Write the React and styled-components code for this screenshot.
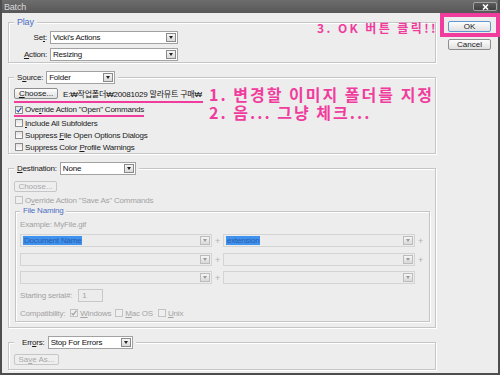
import React from "react";
import styled, { createGlobalStyle } from "styled-components";

const GlobalStyle = createGlobalStyle`
  html, body {
    margin: 0;
    padding: 0;
    background: #ededed;
  }
  body {
    font-family: "Liberation Sans", "Noto Sans CJK KR", sans-serif;
    font-size: 8px;
    letter-spacing: -0.2px;
    color: #1a1a1a;
  }
  * { box-sizing: border-box; }
  u { text-underline-offset: 1px; }
`;

const Window = styled.div`
  position: relative;
  width: 500px;
  height: 375px;
  display: flex;
  flex-direction: column;
  background: #ededed;
  border: 2px solid #4e4e4e;
  border-top: none;
`;

const TitleBar = styled.div`
  flex: none;
  height: 13px;
  display: flex;
  align-items: center;
  justify-content: space-between;
  padding: 0 1px 0 2px;
  background: linear-gradient(#6d6d6d, #585858);
  color: #d9d9d9;
  font-size: 9px;
`;

const CloseBox = styled.div`
  width: 24px;
  height: 9px;
  display: flex;
  align-items: center;
  justify-content: center;
  border: 1px solid #a2a2a2;
  border-radius: 2px;
  background: linear-gradient(#5c5c5c, #3f3f3f);
`;

const Body = styled.div`
  flex: 1;
  display: flex;
  align-items: flex-start;
  padding-left: 6px;
`;

const MainColumn = styled.div`
  width: 428px;
  flex: none;
  padding-top: 3px;
  display: flex;
  flex-direction: column;
  gap: 8px;
`;

const SideColumn = styled.div`
  flex: none;
  margin-left: 4px;
  display: flex;
  flex-direction: column;
`;

const OkMark = styled.div`
  width: 60px;
  padding: 4px 5px 1px 4px;
  border: 4px solid #f03c9d;
`;

const Group = styled.fieldset`
  margin: ${p => p.$margin || "0"};
  min-width: 0;
  padding: ${p => p.$pad || "0 5px"};
  border: 1px solid #c5c5c5;
  box-shadow: inset 1px 1px 0 #fff, 1px 1px 0 #fff;
`;

const Legend = styled.legend`
  display: flex;
  align-items: center;
  gap: 3px;
  padding: 0 3px 0 ${p => p.$indent || 3}px;
  background: #ededed;
  line-height: ${p => p.$lh || 12}px;
  color: ${p => (p.$blue ? "#4d6fc4" : "inherit")};
  font-size: ${p => p.$size || 8}px;
`;

const Row = styled.div`
  display: flex;
  align-items: center;
  gap: ${p => p.$gap ?? 3}px;
  height: ${p => p.$h || 13}px;
  margin-top: ${p => p.$mt || 0}px;
  color: ${p => (p.$off ? "#a3a3a3" : "inherit")};
`;

const Label = styled.span`
  width: ${p => (p.$w ? `${p.$w}px` : "auto")};
  text-align: right;
  white-space: nowrap;
`;

const SelectBox = styled.div`
  width: ${p => p.$w}px;
  height: 13px;
  flex: none;
  display: flex;
  align-items: center;
  padding-left: 2px;
  border: 1px solid ${p => (p.$off ? "#d4d4d4" : "#a2a2a2")};
  background: ${p => (p.$off ? "#ececec" : "#fff")};
  color: ${p => (p.$off ? "#a3a3a3" : "#111")};
`;

const SelectText = styled.span`
  flex: 1;
  overflow: hidden;
  white-space: nowrap;
`;

const Highlight = styled.span`
  background: #3f92ee;
  color: #2a5cab;
  padding: 0 1px;
`;

const Arrow = styled.span`
  width: 10px;
  height: 9px;
  flex: none;
  margin-right: 1px;
  display: flex;
  align-items: center;
  justify-content: center;
  border: 1px solid ${p => (p.$off ? "#bcbcbc" : "#8a8a8a")};
  background: linear-gradient(#f6f6f6, #d9d9d9);

  &::after {
    content: "";
    border-left: 2.5px solid transparent;
    border-right: 2.5px solid transparent;
    border-top: 3px solid ${p => (p.$off ? "#9a9a9a" : "#222")};
  }
`;

const Button = styled.button`
  width: ${p => p.$w}px;
  height: 11px;
  flex: none;
  padding: 0;
  display: flex;
  align-items: center;
  justify-content: center;
  font: inherit;
  border: 1px solid ${p => (p.$off ? "#c6c6c6" : p.$focus ? "#5d97cf" : "#8e8e8e")};
  border-radius: 2px;
  background: ${p => (p.$off ? "#eeeeee" : "linear-gradient(#fdfdfd, #e0e0e0)")};
  color: ${p => (p.$off ? "#a8a8a8" : "#1a1a1a")};
  margin: ${p => p.$margin || "0"};
`;

const Box = styled.span`
  width: 8px;
  height: 8px;
  flex: none;
  display: flex;
  align-items: center;
  justify-content: center;
  border: 1px solid ${p => (p.$off ? "#c3c3c3" : "#8c8c8c")};
  background: ${p => (p.$off ? "#efefef" : "linear-gradient(#e3e3e3, #ffffff)")};
`;

const CheckItem = styled.label`
  display: flex;
  align-items: center;
  gap: 2px;
  height: ${p => p.$h || 12}px;
  padding-left: ${p => p.$indent ?? 1}px;
  white-space: nowrap;
  color: ${p => (p.$off ? "#a3a3a3" : "inherit")};
`;

const Marked = styled.div`
  display: flex;
  align-items: center;
  gap: 5px;
  width: ${p => p.$w}px;
  margin-top: ${p => p.$mt || 0}px;
  padding-bottom: ${p => p.$pb || 0}px;
  border-bottom: 2px solid #f03c9d;
`;

const Path = styled.span`
  white-space: nowrap;
  color: #111;
`;

const Plus = styled.span`
  width: 11px;
  flex: none;
  text-align: center;
  color: #b0b0b0;
  font-size: 9px;
`;

const Input = styled.div`
  width: ${p => p.$w}px;
  height: 13px;
  padding-left: 3px;
  display: flex;
  align-items: center;
  border: 1px solid #c8c8c8;
  background: #ececec;
  color: #a3a3a3;
`;

const Note = styled.div`
  position: absolute;
  left: ${p => p.$x}px;
  top: ${p => p.$y}px;
  color: #f03c9d;
  font-family: "Noto Sans CJK KR", sans-serif;
  font-weight: 700;
  font-size: ${p => p.$size}px;
  line-height: ${p => p.$lh}px;
  letter-spacing: ${p => p.$ls ?? 1}px;
  white-space: nowrap;
`;

function Select({ w, value, off, selected }) {
  return (
    <SelectBox $w={w} $off={off}>
      <SelectText>{selected ? <Highlight>{value}</Highlight> : value}</SelectText>
      <Arrow $off={off} />
    </SelectBox>
  );
}

function Check({ checked, off, children, h, indent }) {
  return (
    <CheckItem $off={off} $h={h} $indent={indent}>
      <Box $off={off}>
        {checked && (
          <svg width="6" height="6" viewBox="0 0 6 6">
            <path d="M0.6 3.1 L2.3 4.9 L5.4 0.6" fill="none" stroke={off ? "#9a9a9a" : "#2d4ea6"} strokeWidth="1.1" />
          </svg>
        )}
      </Box>
      <span>{children}</span>
    </CheckItem>
  );
}

function NameRow({ first, second, mt, last }) {
  return (
    <Row $gap={0} $mt={mt}>
      <Select w={192} off value={first} selected={!!first} />
      <Plus>+</Plus>
      <Select w={192} off value={second} selected={!!second} />
      {!last && <Plus>+</Plus>}
    </Row>
  );
}

export default function App() {
  return (
    <>
      <GlobalStyle />
      <Window>
        <TitleBar>
          <span>Batch</span>
          <CloseBox>
            <svg width="7" height="6" viewBox="0 0 7 6">
              <path d="M1 0.5 L6 5.5 M6 0.5 L1 5.5" stroke="#fff" strokeWidth="1.6" />
            </svg>
          </CloseBox>
        </TitleBar>

        <Body>
          <MainColumn>
            <Group $pad="3px 5px 1px">
              <Legend $blue $size={9}>Play</Legend>
              <Row>
                <Label $w={33}>Se<u>t</u>:</Label>
                <Select w={128} value="Vicki's Actions" />
              </Row>
              <Row $mt={4}>
                <Label $w={33}><u>A</u>ction:</Label>
                <Select w={128} value="Resizing" />
              </Row>
            </Group>

            <Group $pad="4px 5px 0">
              <Legend>
                <Label>S<u>o</u>urce:</Label>
                <Select w={69} value="Folder" />
              </Legend>
              <Marked $w={189} $pb={2}>
                <Button $w={44}><u>C</u>hoose...</Button>
                <Path>E:₩작업폴더₩20081029 말라뮤트 구매₩</Path>
              </Marked>
              <Marked $w={130} $mt={1}>
                <Check checked h={11}>Ove<u>r</u>ride Action "Open" Commands</Check>
              </Marked>
              <Check><u>I</u>nclude All Subfolders</Check>
              <Check>Suppress <u>F</u>ile Open Options Dialogs</Check>
              <Check>Suppress Color <u>P</u>rofile Warnings</Check>
            </Group>

            <Group $pad="6px 5px 5px">
              <Legend>
                <Label><u>D</u>estination:</Label>
                <Select w={76} value="None" />
              </Legend>
              <Button $w={43} $off>Choose...</Button>
              <Row $h={12} $mt={2}>
                <Check off>O<u>v</u>erride Action "Save As" Commands</Check>
              </Row>
              <Group $pad="2px 4px 2px" $margin="0 0 0 1px">
                <Legend $blue $lh={10}>File Naming</Legend>
                <Row $h={12} $off>Example: MyFile.gif</Row>
                <NameRow mt={4} first="Document Name" second="extension" />
                <NameRow mt={6} />
                <NameRow mt={5} last />
                <Row $mt={5} $gap={6} $off>
                  <span>Starting serial#:</span>
                  <Input $w={25}>1</Input>
                </Row>
                <Row $h={12} $mt={5} $gap={4} $off>
                  <span>Compatibility:</span>
                  <Check off checked indent={1}><u>W</u>indows</Check>
                  <Check off indent={0}><u>M</u>ac OS</Check>
                  <Check off indent={1}><u>U</u>nix</Check>
                </Row>
              </Group>
            </Group>

            <Group $pad="5px 5px 4px">
              <Legend $indent={8}>
                <Label>Err<u>o</u>rs:</Label>
                <Select w={85} value="Stop For Errors" />
              </Legend>
              <Button $w={45} $off>Sa<u>v</u>e As...</Button>
            </Group>
          </MainColumn>

          <SideColumn>
            <OkMark>
              <Button $w={43} $focus>OK</Button>
            </OkMark>
            <Button $w={43} $margin="2px 0 0 8px">Cancel</Button>
          </SideColumn>
        </Body>

        <Note $x={315} $y={21} $size={12} $lh={13} $ls={2.4}>3. OK 버튼 클릭!!</Note>
        <Note $x={207} $y={85} $size={16} $lh={18} $ls={2}>
          1. 변경할 이미지 폴더를 지정
          <br />
          2. 음... 그냥 체크...
        </Note>
      </Window>
    </>
  );
}
